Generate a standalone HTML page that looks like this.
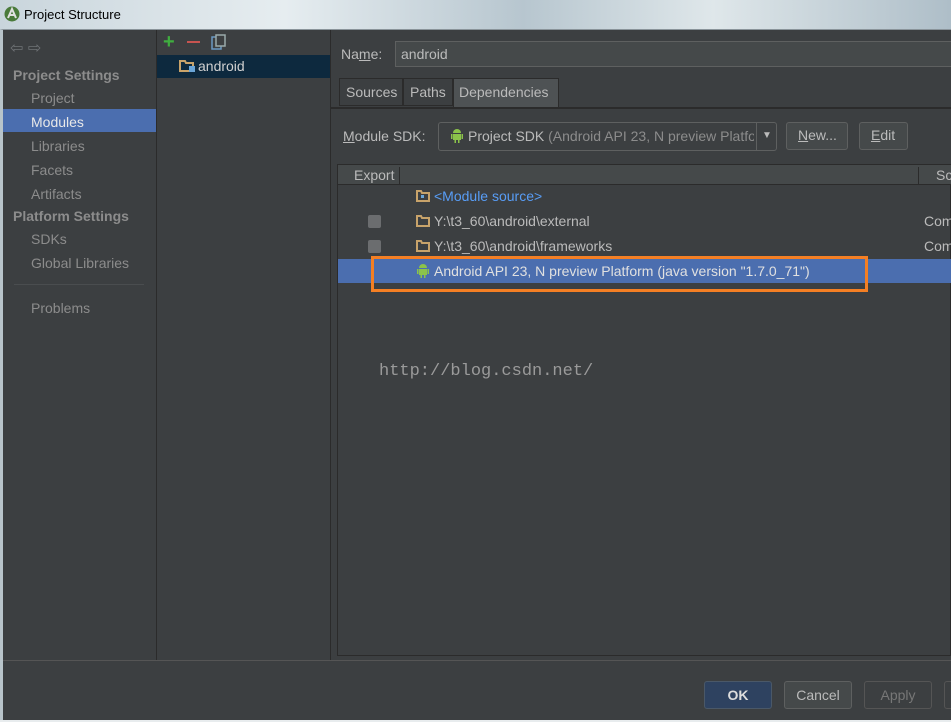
<!DOCTYPE html>
<html><head><meta charset="utf-8"><style>
*{margin:0;padding:0;box-sizing:border-box}
body{width:951px;height:722px;overflow:hidden;background:#3c3f41;font-family:"Liberation Sans","DejaVu Sans",sans-serif;font-size:14px;color:#bbbbbb;position:relative}
.a{position:absolute;white-space:nowrap}
</style></head><body>
<!-- title bar -->
<div class="a" style="left:0;top:0;width:951px;height:30px;background:linear-gradient(90deg,#c9d5dc,#e6edf0 30%,#b7c6cf 55%,#dfe7ea 75%,#aebec8)"></div>
<svg class="a" style="left:4px;top:6px" width="16" height="16"><circle cx="8" cy="8" r="7.5" fill="#4a7a3a"/><path d="M4 12 L8 3 L12 12 M5.5 9 H10.5" stroke="#e0e0e0" stroke-width="2" fill="none"/></svg>
<div class="a" style="left:24px;top:7px;font-size:13px;color:#000">Project Structure</div>
<div class="a" style="left:0;top:29px;width:951px;height:693px;background:#3c3f41;border-top:1px solid #8a949a;border-left:3px solid #b8c4ca"></div>
<!-- sidebar -->
<div class="a" style="left:156px;top:30px;width:1px;height:630px;background:#2b2b2b"></div>
<div class="a" style="left:10px;top:38px;font-size:16px;color:#6e7275">⇦ ⇨</div>
<div class="a" style="left:13px;top:67px;font-weight:bold;color:#8c8c8c">Project Settings</div>
<div class="a" style="left:31px;top:90px;color:#8c8c8c">Project</div>
<div class="a" style="left:3px;top:109px;width:153px;height:23px;background:#4b6eaf"></div>
<div class="a" style="left:31px;top:114px;color:#e8e8e8">Modules</div>
<div class="a" style="left:31px;top:138px;color:#8c8c8c">Libraries</div>
<div class="a" style="left:31px;top:162px;color:#8c8c8c">Facets</div>
<div class="a" style="left:31px;top:186px;color:#8c8c8c">Artifacts</div>
<div class="a" style="left:13px;top:208px;font-weight:bold;color:#8c8c8c">Platform Settings</div>
<div class="a" style="left:31px;top:231px;color:#8c8c8c">SDKs</div>
<div class="a" style="left:31px;top:255px;color:#8c8c8c">Global Libraries</div>
<div class="a" style="left:14px;top:284px;width:130px;height:1px;background:#4a4d4f"></div>
<div class="a" style="left:31px;top:300px;color:#8c8c8c">Problems</div>
<!-- middle -->
<div class="a" style="left:330px;top:30px;width:1px;height:630px;background:#2b2b2b"></div>
<div class="a" style="left:163px;top:31px;font-size:20px;color:#3fae3f;font-weight:bold">+</div>
<div class="a" style="left:187px;top:41px;width:13px;height:2px;background:#c75450"></div>
<svg class="a" style="left:211px;top:34px" width="16" height="16"><rect x="1" y="3" width="9" height="12" fill="none" stroke="#6b9ac4" stroke-width="1.5"/><rect x="5" y="1" width="9" height="11" fill="#3c3f41" stroke="#9aa" stroke-width="1.5"/></svg>
<div class="a" style="left:157px;top:55px;width:173px;height:23px;background:#0d293e"></div>
<svg class="a" style="left:179px;top:59px" width="18" height="14"><path d="M1 2 H6 L7 4 H14 V12 H1 Z" fill="none" stroke="#c8a36a" stroke-width="2"/><rect x="10" y="7" width="6" height="6" fill="#6ba6d8"/></svg>
<div class="a" style="left:198px;top:58px;color:#d0d0d0">android</div>
<!-- right -->
<div class="a" style="left:341px;top:46px;color:#bbb">Na<u>m</u>e:</div>
<div class="a" style="left:395px;top:41px;width:560px;height:26px;background:#45494a;border:1px solid #5e6060"></div>
<div class="a" style="left:401px;top:46px;color:#bbb">android</div>
<div class="a" style="left:339px;top:78px;width:64px;height:28px;border:1px solid #2b2b2b;background:#3c3f41"></div>
<div class="a" style="left:346px;top:84px">Sources</div>
<div class="a" style="left:403px;top:78px;width:50px;height:28px;border:1px solid #2b2b2b"></div>
<div class="a" style="left:410px;top:84px">Paths</div>
<div class="a" style="left:453px;top:78px;width:106px;height:29px;background:#4e5254;border:1px solid #2b2b2b;border-bottom:none"></div>
<div class="a" style="left:459px;top:84px">Dependencies</div>
<div class="a" style="left:331px;top:107px;width:620px;height:2px;background:#2b2b2b"></div>
<div class="a" style="left:343px;top:128px"><u>M</u>odule SDK:</div>
<div class="a" style="left:438px;top:122px;width:339px;height:29px;background:#3c3f41;border:1px solid #5e6060;border-radius:3px"></div>
<div class="a" style="left:756px;top:123px;width:1px;height:27px;background:#5e6060"></div>
<div class="a" style="left:762px;top:130px;font-size:10px">▼</div>
<svg class="a" style="left:450px;top:127px" width="14" height="16"><path d="M3 6 A4 4 0 0 1 11 6 Z" fill="#8bc34a"/><rect x="3" y="7" width="8" height="6" fill="#8bc34a"/><rect x="1" y="7" width="1.5" height="5" fill="#8bc34a"/><rect x="11.5" y="7" width="1.5" height="5" fill="#8bc34a"/><rect x="4.5" y="13" width="1.5" height="3" fill="#8bc34a"/><rect x="8" y="13" width="1.5" height="3" fill="#8bc34a"/></svg>
<div class="a" style="left:468px;top:128px;width:286px;overflow:hidden">Project SDK <span style="color:#8c8c8c">(Android API 23, N preview Platform</span></div>
<div class="a" style="left:786px;top:122px;width:62px;height:28px;background:#45494a;border:1px solid #5e6060;border-radius:3px"></div>
<div class="a" style="left:798px;top:127px"><u>N</u>ew...</div>
<div class="a" style="left:859px;top:122px;width:49px;height:28px;background:#45494a;border:1px solid #5e6060;border-radius:3px"></div>
<div class="a" style="left:871px;top:127px"><u>E</u>dit</div>
<!-- table -->
<div class="a" style="left:337px;top:164px;width:614px;height:492px;border:1px solid #2b2b2b;background:#3c3f41"></div>
<div class="a" style="left:338px;top:165px;width:613px;height:20px;background:#45494a;border-bottom:1px solid #2b2b2b"></div>
<div class="a" style="left:354px;top:167px">Export</div>
<div class="a" style="left:399px;top:167px;width:1px;height:17px;background:#2b2b2b"></div>
<div class="a" style="left:918px;top:167px;width:1px;height:17px;background:#2b2b2b"></div>
<div class="a" style="left:936px;top:167px">Sc</div>
<svg class="a" style="left:416px;top:190px" width="14" height="12"><path d="M1 1 H5 L6 3 H13 V11 H1 Z" fill="none" stroke="#c8a36a" stroke-width="2"/><rect x="5" y="5" width="3" height="3" fill="#6ba6d8"/></svg>
<div class="a" style="left:434px;top:188px;color:#589df6">&lt;Module source&gt;</div>
<div class="a" style="left:368px;top:215px;width:13px;height:13px;background:#6b6d6f;border-radius:2px"></div>
<svg class="a" style="left:416px;top:215px" width="14" height="12"><path d="M1 1 H5 L6 3 H13 V11 H1 Z" fill="none" stroke="#c8a36a" stroke-width="2"/></svg>
<div class="a" style="left:434px;top:213px">Y:\t3_60\android\external</div>
<div class="a" style="left:924px;top:213px">Com</div>
<div class="a" style="left:368px;top:240px;width:13px;height:13px;background:#6b6d6f;border-radius:2px"></div>
<svg class="a" style="left:416px;top:240px" width="14" height="12"><path d="M1 1 H5 L6 3 H13 V11 H1 Z" fill="none" stroke="#c8a36a" stroke-width="2"/></svg>
<div class="a" style="left:434px;top:238px">Y:\t3_60\android\frameworks</div>
<div class="a" style="left:924px;top:238px">Com</div>
<div class="a" style="left:338px;top:259px;width:613px;height:24px;background:#4b6eaf"></div>
<svg class="a" style="left:416px;top:262px" width="14" height="16"><path d="M3 6 A4 4 0 0 1 11 6 Z" fill="#8bc34a"/><rect x="3" y="7" width="8" height="6" fill="#8bc34a"/><rect x="1" y="7" width="1.5" height="5" fill="#8bc34a"/><rect x="11.5" y="7" width="1.5" height="5" fill="#8bc34a"/><rect x="4.5" y="13" width="1.5" height="3" fill="#8bc34a"/><rect x="8" y="13" width="1.5" height="3" fill="#8bc34a"/></svg>
<div class="a" style="left:434px;top:263px;color:#e0e0e0">Android API 23, N preview Platform (java version "1.7.0_71")</div>
<div class="a" style="left:371px;top:256px;width:497px;height:36px;border:3px solid #f47f24"></div>
<div class="a" style="left:379px;top:362px;font-family:'Liberation Mono',monospace;font-size:17px;color:#9a9a9a">http://blog.csdn.net/</div>
<!-- bottom -->
<div class="a" style="left:3px;top:660px;width:948px;height:1px;background:#555"></div>
<div class="a" style="left:704px;top:681px;width:68px;height:28px;background:#2e4260;border:1px solid #4a5868;border-radius:3px;text-align:center;line-height:26px;font-weight:bold;color:#ddd">OK</div>
<div class="a" style="left:784px;top:681px;width:68px;height:28px;background:#45494a;border:1px solid #5e6060;border-radius:3px;text-align:center;line-height:26px">Cancel</div>
<div class="a" style="left:864px;top:681px;width:68px;height:28px;border:1px solid #555;border-radius:3px;text-align:center;line-height:26px;color:#777">Apply</div>
<div class="a" style="left:944px;top:681px;width:20px;height:28px;border:1px solid #555;border-radius:3px"></div>
<div class="a" style="left:0;top:720px;width:951px;height:2px;background:#e8ecee"></div>
</body></html>
